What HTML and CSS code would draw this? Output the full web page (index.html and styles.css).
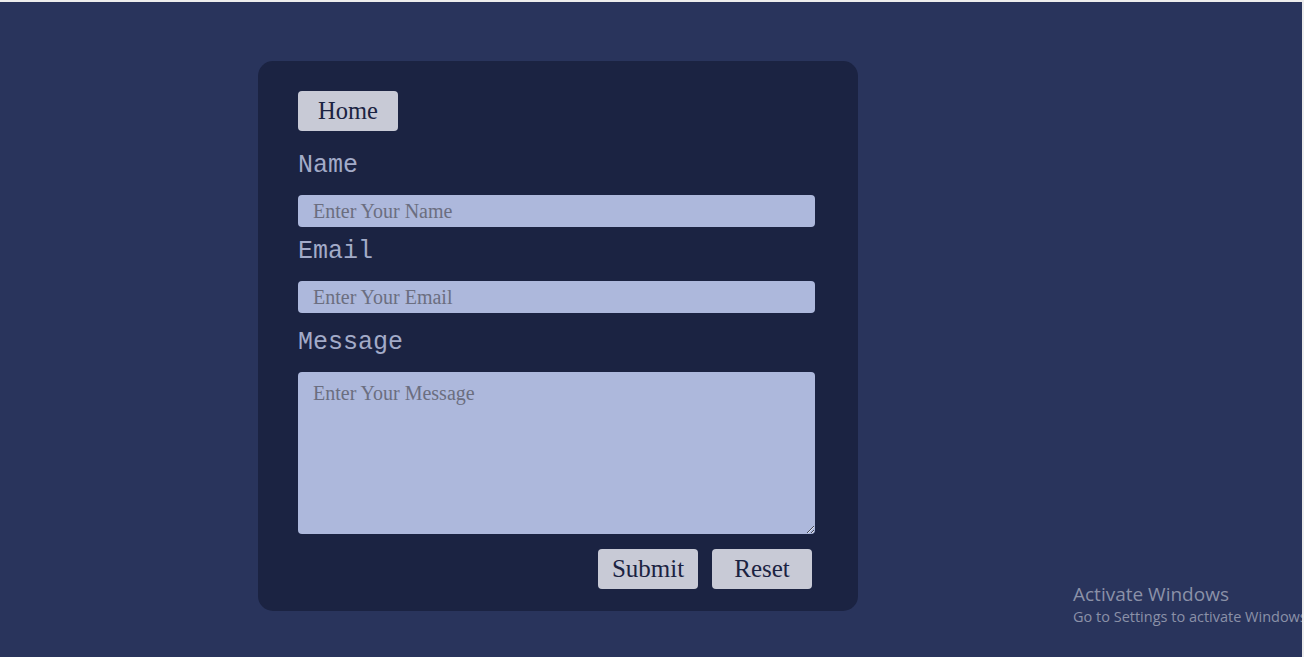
FILE: index.html
```html
<!DOCTYPE html>
<html lang="en">
<head>
<meta charset="utf-8">
<title>Contact</title>
<link rel="stylesheet" href="styles.css">
</head>
<body>
<div class="viewport">
  <main class="page">
    <form class="card">
      <button type="button" class="btn btn-home">Home</button>
      <label class="label label-name" for="name">Name</label>
      <input class="field" id="name" type="text" placeholder="Enter Your Name">
      <label class="label label-email" for="email">Email</label>
      <input class="field" id="email" type="email" placeholder="Enter Your Email">
      <label class="label label-message" for="message">Message</label>
      <textarea class="field area" id="message" placeholder="Enter Your Message"></textarea>
      <div class="actions">
        <button type="submit" class="btn">Submit</button>
        <button type="reset" class="btn">Reset</button>
      </div>
    </form>
  </main>
  <div class="activate">
    <div class="activate-title">Activate Windows</div>
    <div class="activate-sub">Go to Settings to activate Windows.</div>
  </div>
</div>
</body>
</html>
```
FILE: styles.css
```css
html, body {
  margin: 0;
  padding: 0;
  background: #ededed;
}
.viewport {
  position: relative;
  width: 1302px;
  height: 655px;
  margin-top: 2px;
  background: #29345c;
  overflow: hidden;
}
.page {
  padding-top: 59px;
  padding-left: 258px;
}
.card {
  width: 600px;
  box-sizing: border-box;
  padding: 30px 43px 22px 40px;
  background: #1b2342;
  border-radius: 15px;
  display: flex;
  flex-direction: column;
  align-items: flex-start;
}
.btn {
  width: 100px;
  height: 40px;
  border: none;
  border-radius: 4px;
  background: #c8cad6;
  color: #1b2342;
  font-family: "Liberation Serif", "Times New Roman", serif;
  font-size: 25px;
  padding: 0;
  cursor: pointer;
}
.btn-home {
  font-size: 24.5px;
}
.label {
  display: block;
  font-family: "Liberation Mono", "Courier New", monospace;
  font-size: 25px;
  line-height: 28px;
  color: #a3abc8;
  margin-bottom: 15px;
}
.label-name { margin-top: 21px; }
.label-email { margin-top: 11px; }
.label-message { margin-top: 16px; }
.field {
  width: 517px;
  height: 32px;
  box-sizing: border-box;
  border: none;
  border-radius: 4px;
  background: #adb8dc;
  padding: 5px 15px;
  font-family: "Liberation Serif", "Times New Roman", serif;
  font-size: 20px;
  color: #1b2342;
  outline: none;
  margin: 0;
}
.field::placeholder {
  color: #6b6e80;
}
.area {
  height: 162px;
  padding: 10px 15px;
  resize: both;
  display: block;
}
.actions {
  align-self: stretch;
  display: flex;
  justify-content: flex-end;
  gap: 14px;
  padding-right: 3px;
  margin-top: 15px;
}
.activate {
  position: absolute;
  left: 1073px;
  top: 579px;
  font-family: "Open Sans", "Noto Sans", sans-serif;
  color: #8b91a8;
  white-space: nowrap;
}
.activate-title {
  font-size: 19px;
  line-height: 26px;
}
.activate-sub {
  font-size: 14.5px;
  line-height: 20px;
}
```
